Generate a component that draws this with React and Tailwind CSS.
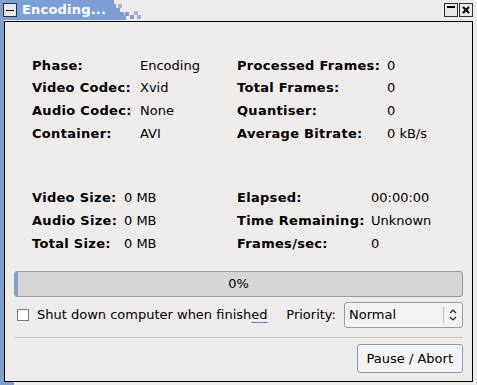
import { useState } from 'react'

const font = { fontFamily: '"DejaVu Sans", Verdana, sans-serif' }

function Row({ label, value, lw }) {
  return (
    <div className="flex h-[22.7px] items-center">
      <span className="font-bold shrink-0 tracking-[0.3px]" style={{ width: lw }}>{label}</span>
      <span>{value}</span>
    </div>
  )
}

function App() {
  const [shutdown, setShutdown] = useState(false)

  return (
    <div className="w-[477px] h-[385px] bg-[#edeceb] text-[13px] text-black relative overflow-hidden" style={font}>
      {/* title bar */}
      <div className="flex h-[21px] items-start">
        <div className="flex h-[20px] items-center bg-[#7c9fd6] pl-[3px] w-[108px] shrink-0">
          <div className="w-[14px] h-[14px] border border-[#303030] bg-[#e8e8e8] flex items-center justify-center shrink-0">
            <div className="w-[8px] h-[1px] bg-black" />
          </div>
          <span className="ml-[5px] text-white font-bold text-[13px] tracking-[0.2px] whitespace-nowrap">Encoding...</span>
        </div>
        <svg width="34" height="20" viewBox="0 0 34 20" className="shrink-0">
          <path d="M0 0H6V4H8V8H12V12H16V15H18V20H0Z" fill="#7c9fd6" />
          <rect x="10" y="4" width="4" height="4" fill="#9db6e0" />
          <rect x="17" y="12" width="4" height="4" fill="#7c9fd6" />
          <rect x="22" y="15" width="4" height="4" fill="#7c9fd6" />
          <rect x="26" y="11" width="4" height="4" fill="#9db6e0" />
          <rect x="29" y="15" width="4" height="4" fill="#9db6e0" />
        </svg>
        <div className="flex-1" />
        <div className="flex gap-[1px] mt-[3px] mr-[4px]">
          <div className="w-[14px] h-[14px] border border-[#303030] bg-[#e8e8e8] flex justify-center pt-[2px]">
            <div className="w-[8px] h-[2px] bg-black" />
          </div>
          <div className="w-[14px] h-[14px] border border-[#303030] bg-[#e8e8e8] flex items-center justify-center">
            <svg width="8" height="8" viewBox="0 0 8 8">
              <path d="M1 1L7 7M7 1L1 7" stroke="black" strokeWidth="2" />
            </svg>
          </div>
        </div>
      </div>

      {/* frame */}
      <div className="absolute left-0 top-[20px] bottom-0 w-[4px] bg-[#7c9fd6]" />
      <div className="absolute left-0 bottom-0 w-[14px] h-[3px] bg-[#7c9fd6]" />

      <div className="ml-[4px] mr-[4px] h-[361px] border border-black">
        <div className="pl-[27px] pt-[32px]">
          <div className="flex">
            <div className="w-[205px]">
              <Row label="Phase:" value="Encoding" lw={108} />
              <Row label="Video Codec:" value="Xvid" lw={108} />
              <Row label="Audio Codec:" value="None" lw={108} />
              <Row label="Container:" value="AVI" lw={108} />
            </div>
            <div>
              <Row label="Processed Frames:" value="0" lw={150} />
              <Row label="Total Frames:" value="0" lw={150} />
              <Row label="Quantiser:" value="0" lw={150} />
              <Row label="Average Bitrate:" value="0 kB/s" lw={150} />
            </div>
          </div>
          <div className="flex mt-[42px]">
            <div className="w-[205px]">
              <Row label="Video Size:" value="0 MB" lw={92} />
              <Row label="Audio Size:" value="0 MB" lw={92} />
              <Row label="Total Size:" value="0 MB" lw={92} />
            </div>
            <div>
              <Row label="Elapsed:" value="00:00:00" lw={134} />
              <Row label="Time Remaining:" value="Unknown" lw={134} />
              <Row label="Frames/sec:" value="0" lw={134} />
            </div>
          </div>
        </div>

        <div className="px-[9px] mt-[16px]">
          <div className="relative h-[26px] rounded-[3px] border border-[#9a9a9a] bg-[#d6d6d6] flex items-center justify-center">
            <div className="absolute left-0 top-0 bottom-0 w-[3px] rounded-l-[2px] bg-[#7c9fd6]" />
            <span>0%</span>
          </div>

          <div className="flex items-center h-[26px] mt-[5px]">
            <button
              onClick={() => setShutdown(!shutdown)}
              className="w-[12px] h-[12px] ml-[3px] border border-[#7a7a7a] bg-white flex items-center justify-center shrink-0"
            >
              {shutdown && <span className="text-[10px] leading-none">✓</span>}
            </button>
            <span className="ml-[8px] whitespace-nowrap">
              Shut down computer when finish<span className="underline decoration-[#5b7fc0] underline-offset-[3px]">ed</span>
            </span>
            <span className="ml-auto">Priority:</span>
            <div className="ml-[8px] w-[119px] h-[26px] rounded-[3px] border border-[#9a9a9a] bg-[#f2f2f2] flex items-center shrink-0">
              <span className="flex-1 pl-[4px]">Normal</span>
              <div className="w-[1px] h-[16px] bg-[#b8b8b8]" />
              <svg width="18" height="14" viewBox="0 0 18 14">
                <path d="M6 5L9 2L12 5M6 9L9 12L12 9" fill="none" stroke="#222" strokeWidth="1.2" />
              </svg>
            </div>
          </div>

          <div className="h-[1px] bg-[#c8c8c8] mt-[9px]" />

          <div className="flex justify-end mt-[6px]">
            <button className="h-[29px] px-[9px] rounded-[3px] border border-[#7f9cc8] bg-[#f3f3f3] text-[13px]">
              Pause / Abort
            </button>
          </div>
        </div>
      </div>
    </div>
  )
}

export default App
